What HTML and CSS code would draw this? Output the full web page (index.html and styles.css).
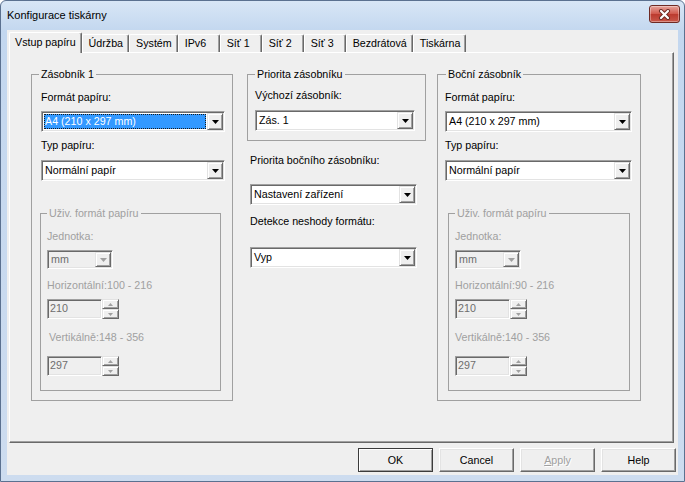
FILE: index.html
```html
<!DOCTYPE html>
<html lang="cs">
<head>
  <meta charset="UTF-8" />
  <title>Konfigurace tiskárny</title>
  <link rel="stylesheet" href="styles.css">
</head>
<body>
  <div class="window">
    <div class="titlebar">
      <span class="title">Konfigurace tiskárny</span>
      <button class="close">
        <svg width="13" height="11" viewBox="0 0 13 11">
          <path d="M3 2 L10 9 M10 2 L3 9" stroke="#6a2a22" stroke-width="4" stroke-linecap="round"/>
          <path d="M3 2 L10 9 M10 2 L3 9" stroke="#fff" stroke-width="2.2" stroke-linecap="round"/>
        </svg>
      </button>
    </div>

    <div class="client">
      <div class="tabs">
        <div class="tab active">Vstup papíru</div>
        <div class="tab">Údržba</div>
        <div class="tab">Systém</div>
        <div class="tab">IPv6</div>
        <div class="tab">Síť 1</div>
        <div class="tab">Síť 2</div>
        <div class="tab">Síť 3</div>
        <div class="tab">Bezdrátová</div>
        <div class="tab">Tiskárna</div>
      </div>

      <div class="panel">
        <!-- Zásobník 1 -->
        <fieldset class="group tray">
          <legend>Zásobník 1</legend>
          <div class="label first">Formát papíru:</div>
          <div class="combo">
            <span class="value"><span class="sel">A4 (210 x 297 mm)</span></span>
            <span class="drop"><svg width="7" height="4" viewBox="0 0 7 4"><path d="M0 0H7L3.5 4Z" fill="#000"/></svg></span>
          </div>
          <div class="label">Typ papíru:</div>
          <div class="combo gap8">
            <span class="value">Normální papír</span>
            <span class="drop"><svg width="7" height="4" viewBox="0 0 7 4"><path d="M0 0H7L3.5 4Z" fill="#000"/></svg></span>
          </div>

          <fieldset class="group custom">
            <legend>Uživ. formát papíru</legend>
            <div class="label first">Jednotka:</div>
            <div class="combo small off">
              <span class="value">mm</span>
              <span class="drop"><svg width="7" height="4" viewBox="0 0 7 4"><path d="M0 0H7L3.5 4Z" fill="#a0a0a0"/></svg></span>
            </div>
            <div class="label first">Horizontální:100 - 216</div>
            <div class="spin">
              <span class="edit">210</span>
              <span class="arrows">
                <span><svg width="5" height="3" viewBox="0 0 5 3"><path d="M0 3H5L2.5 0Z" fill="#a0a0a0"/></svg></span>
                <span><svg width="5" height="3" viewBox="0 0 5 3"><path d="M0 0H5L2.5 3Z" fill="#a0a0a0"/></svg></span>
              </span>
            </div>
            <div class="label wide indent">Vertikálně:148 - 356</div>
            <div class="spin wide">
              <span class="edit">297</span>
              <span class="arrows">
                <span><svg width="5" height="3" viewBox="0 0 5 3"><path d="M0 3H5L2.5 0Z" fill="#a0a0a0"/></svg></span>
                <span><svg width="5" height="3" viewBox="0 0 5 3"><path d="M0 0H5L2.5 3Z" fill="#a0a0a0"/></svg></span>
              </span>
            </div>
          </fieldset>
        </fieldset>

        <!-- Priority -->
        <div class="middle">
          <fieldset class="group priority">
            <legend>Priorita zásobníku</legend>
            <div class="label">Výchozí zásobník:</div>
            <div class="combo">
              <span class="value">Zás. 1</span>
              <span class="drop"><svg width="7" height="4" viewBox="0 0 7 4"><path d="M0 0H7L3.5 4Z" fill="#000"/></svg></span>
            </div>
          </fieldset>
          <div class="label side-prio">Priorita bočního zásobníku:</div>
          <div class="combo side-combo">
            <span class="value">Nastavení zařízení</span>
            <span class="drop"><svg width="7" height="4" viewBox="0 0 7 4"><path d="M0 0H7L3.5 4Z" fill="#000"/></svg></span>
          </div>
          <div class="label mismatch">Detekce neshody formátu:</div>
          <div class="combo mismatch-combo">
            <span class="value">Vyp</span>
            <span class="drop"><svg width="7" height="4" viewBox="0 0 7 4"><path d="M0 0H7L3.5 4Z" fill="#000"/></svg></span>
          </div>
        </div>

        <!-- Boční zásobník -->
        <fieldset class="group tray side">
          <legend>Boční zásobník</legend>
          <div class="label first">Formát papíru:</div>
          <div class="combo">
            <span class="value">A4 (210 x 297 mm)</span>
            <span class="drop"><svg width="7" height="4" viewBox="0 0 7 4"><path d="M0 0H7L3.5 4Z" fill="#000"/></svg></span>
          </div>
          <div class="label">Typ papíru:</div>
          <div class="combo gap8">
            <span class="value">Normální papír</span>
            <span class="drop"><svg width="7" height="4" viewBox="0 0 7 4"><path d="M0 0H7L3.5 4Z" fill="#000"/></svg></span>
          </div>

          <fieldset class="group custom">
            <legend>Uživ. formát papíru</legend>
            <div class="label first">Jednotka:</div>
            <div class="combo small off">
              <span class="value">mm</span>
              <span class="drop"><svg width="7" height="4" viewBox="0 0 7 4"><path d="M0 0H7L3.5 4Z" fill="#a0a0a0"/></svg></span>
            </div>
            <div class="label first">Horizontální:90 - 216</div>
            <div class="spin">
              <span class="edit">210</span>
              <span class="arrows">
                <span><svg width="5" height="3" viewBox="0 0 5 3"><path d="M0 3H5L2.5 0Z" fill="#a0a0a0"/></svg></span>
                <span><svg width="5" height="3" viewBox="0 0 5 3"><path d="M0 0H5L2.5 3Z" fill="#a0a0a0"/></svg></span>
              </span>
            </div>
            <div class="label wide">Vertikálně:140 - 356</div>
            <div class="spin wide">
              <span class="edit">297</span>
              <span class="arrows">
                <span><svg width="5" height="3" viewBox="0 0 5 3"><path d="M0 3H5L2.5 0Z" fill="#a0a0a0"/></svg></span>
                <span><svg width="5" height="3" viewBox="0 0 5 3"><path d="M0 0H5L2.5 3Z" fill="#a0a0a0"/></svg></span>
              </span>
            </div>
          </fieldset>
        </fieldset>
      </div>

      <div class="buttons">
        <button class="btn default">OK</button>
        <button class="btn">Cancel</button>
        <button class="btn disabled"><u>A</u>pply</button>
        <button class="btn">Help</button>
      </div>
    </div>
  </div>
</body>
</html>
```

FILE: styles.css
```css
* {
  box-sizing: border-box;
}

body {
  margin: 0;
  background: #fff;
  font-family: "Liberation Sans", Arial, sans-serif;
  font-size: 10.7px;
  color: #000;
}

/* Okno */
.window {
  width: 685px;
  height: 482px;
  display: flex;
  flex-direction: column;
  border: 1px solid #5b7190;
  border-radius: 6px 6px 0 0;
  background: linear-gradient(#d8e6f6, #c3d7ef 30px, #cddcef);
  padding: 0 6px 6px 6px;
}

.titlebar {
  height: 29px;
  flex-shrink: 0;
  display: flex;
  justify-content: space-between;
  align-items: flex-start;
}

.title {
  margin-top: 7px;
  line-height: 14px;
  font-size: 11px;
}

.close {
  width: 31px;
  height: 18px;
  margin: 4px -2px 0 0;
  padding: 0;
  border: 1px solid #6e2a24;
  border-radius: 3px;
  background: linear-gradient(#e6a49b, #d0574b 50%, #bb3a2e 51%, #c9574a);
  box-shadow: inset 0 0 0 1px rgba(255, 255, 255, 0.35);
  display: flex;
  align-items: center;
  justify-content: center;
}

.client {
  flex: 1;
  display: flex;
  flex-direction: column;
  background: #efefef;
  padding: 0 4px 0 2px;
}

/* Záložky */
.tabs {
  height: 21px;
  margin-top: 1px;
  display: flex;
  align-items: flex-end;
  position: relative;
  z-index: 1;
}

.tab {
  height: 18px;
  min-width: 42px;
  padding: 0 5px 0 6px;
  line-height: 17px;
  white-space: nowrap;
  background: #efefef;
  border-top: 1px solid #fff;
  border-left: 1px solid #fff;
  border-right: 1px solid #696969;
  border-radius: 2px 2px 0 0;
  box-shadow: inset -1px 0 0 #a0a0a0;
}

.tab.active {
  height: 21px;
  margin-bottom: -1px;
  line-height: 19px;
  padding-left: 5px;
}

.panel {
  height: 391px;
  display: flex;
  align-items: flex-start;
  padding: 15px 0 0 21px;
  background: #efefef;
  border: 1px solid;
  border-color: #fff #696969 #696969 #fff;
  box-shadow: inset -1px -1px 0 #a0a0a0;
}

/* Popisky */
.label {
  line-height: 13px;
  margin-top: 7px;
  white-space: nowrap;
}

.label.first {
  margin-top: 10px;
}

.label.wide {
  margin-top: 12px;
}

.label.indent {
  padding-left: 2px;
}

/* Rozbalovací seznam */
.combo {
  display: flex;
  height: 21px;
  margin-top: 7px;
  padding: 1px;
  background: #fff;
  border: 1px solid;
  border-color: #a0a0a0 #fff #fff #a0a0a0;
  box-shadow: inset 1px 1px 0 #696969, inset -1px -1px 0 #e3e3e3;
  color: #000;
}

.combo.gap8 {
  margin-top: 8px;
}

.combo .value {
  flex: 1;
  padding-left: 2px;
  line-height: 17px;
  white-space: nowrap;
  overflow: hidden;
}

.combo .sel {
  display: block;
  margin: 1px 1px 1px -1px;
  padding-left: 1px;
  line-height: 15px;
  background: #3399ff;
  color: #fff;
  outline: 1px dotted #1a1a1a;
  outline-offset: -1px;
}

.combo .drop {
  width: 16px;
  display: flex;
  align-items: center;
  justify-content: center;
  background: #efefef;
  border: 1px solid;
  border-color: #e3e3e3 #696969 #696969 #e3e3e3;
  box-shadow: inset 1px 1px 0 #fff, inset -1px -1px 0 #a0a0a0;
}

.combo.small {
  width: 66px;
  height: 19px;
}

.combo.small .value {
  line-height: 15px;
}

.combo.off {
  background: #efefef;
  color: #6d6d6d;
}

/* Číselník */
.spin {
  display: flex;
  height: 20px;
  margin-top: 7px;
}

.spin.wide {
  margin-top: 12px;
}

.spin .edit {
  width: 55px;
  padding-left: 2px;
  line-height: 16px;
  color: #6d6d6d;
  background: #efefef;
  border: 1px solid;
  border-color: #a0a0a0 #fff #fff #a0a0a0;
  box-shadow: inset 1px 1px 0 #696969, inset -1px -1px 0 #e3e3e3;
}

.spin .arrows {
  width: 17px;
  display: flex;
  flex-direction: column;
}

.spin .arrows span {
  flex: 1;
  display: flex;
  align-items: center;
  justify-content: center;
  background: #efefef;
  border: 1px solid;
  border-color: #e3e3e3 #696969 #696969 #e3e3e3;
  box-shadow: inset 1px 1px 0 #fff, inset -1px -1px 0 #a0a0a0;
}

/* Skupiny */
.group {
  margin: 0;
  min-width: 0;
  border: 1px solid #a0a0a0;
  padding: 0 7px 0 9px;
}

.group legend {
  padding: 0 2px;
  margin-left: -2px;
  line-height: 13px;
}

.tray {
  width: 202px;
  height: 333px;
}

.tray.side {
  width: 204px;
  margin-left: 11px;
  padding: 0 8px 0 7px;
}

.tray.side > legend {
  margin-left: 1px;
}

.custom {
  width: 181px;
  height: 184px;
  margin: 26px 0 0 -1px;
  padding: 0 6px;
  color: #a0a0a0;
}

.custom legend {
  margin-left: 0;
}

.side .custom {
  width: 182px;
  margin-left: 3px;
}

/* Prostřední sloupec */
.middle {
  width: 179px;
  margin-left: 14px;
  display: flex;
  flex-direction: column;
}

.priority {
  width: 179px;
  height: 73px;
  padding: 0 10px 0 7px;
}

.priority legend {
  margin-left: 0;
}

.priority .label {
  margin-top: 8px;
}

.priority .combo {
  margin-top: 8px;
  width: 160px;
}

.middle > .label,
.middle > .combo {
  margin-left: 3px;
}

.middle > .combo {
  width: 167px;
}

.middle > .side-prio {
  margin-top: 13px;
}

.middle > .side-combo {
  margin-top: 17px;
}

.middle > .mismatch {
  margin-top: 10px;
}

.middle > .mismatch-combo {
  margin-top: 19px;
}

/* Tlačítka */
.buttons {
  display: flex;
  justify-content: flex-end;
  gap: 6px;
  margin: 5px -2px 0 0;
}

.btn {
  width: 75px;
  height: 24px;
  padding: 0;
  font: inherit;
  color: #000;
  background: #efefef;
  border: 1px solid;
  border-color: #fff #696969 #696969 #fff;
  box-shadow: inset -1px -1px 0 #a0a0a0, inset 1px 1px 0 #e3e3e3;
}

.btn.default {
  border-color: #3c3c3c;
  box-shadow: inset 1px 1px 0 #fff, inset -1px -1px 0 #a0a0a0;
}

.btn.disabled {
  color: #a0a0a0;
  text-shadow: 1px 1px 0 #fff;
}
```
